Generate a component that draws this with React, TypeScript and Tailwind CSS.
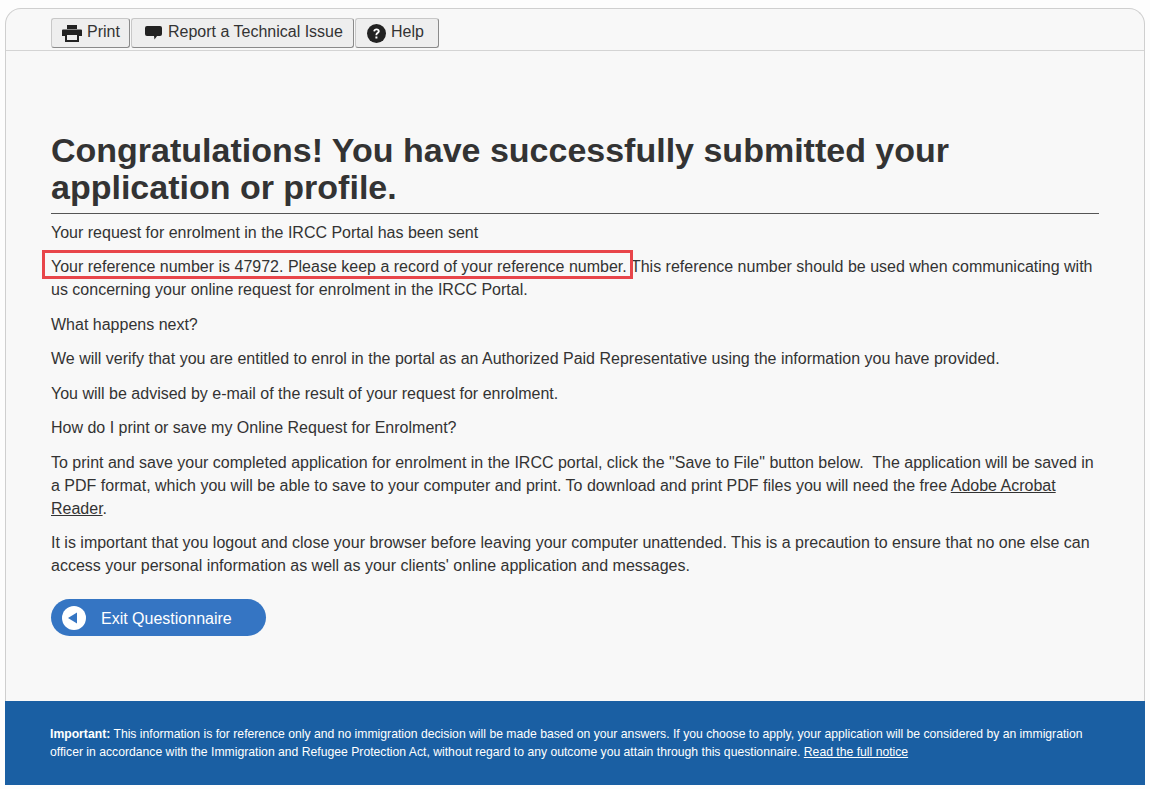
import React from "react";

function PrinterIcon() {
  return (
    <svg width="20" height="17" viewBox="0 0 20 17" fill="#222">
      <path d="M5 0h10v4H5z" />
      <path fillRule="evenodd" d="M1 4.500h18q1 0 1 1V11h-3v6H3v-6H0V5.500q0-1 1-1zM5 10v5h10v-5z" />
    </svg>
  );
}

function CommentIcon() {
  return (
    <svg width="17" height="16" viewBox="0 0 17 16" fill="#222">
      <path d="M2 1h13q2 0 2 2v6q0 2-2 2h-3l-2.500 3.500L9 11H2q-2 0-2-2V3q0-2 2-2z" />
    </svg>
  );
}

function HelpIcon() {
  return (
    <svg width="19" height="19" viewBox="0 0 19 19">
      <circle cx="9.500" cy="9.500" r="9.500" fill="#222" />
      <path d="M6.300 7.300c.2-1.800 1.500-2.700 3.200-2.700 1.800 0 3.200 1 3.200 2.600 0 2.200-2.500 2.200-2.500 4H8.500c0-2.700 2.300-2.800 2.300-3.900 0-.6-.6-1-1.300-1-.8 0-1.300.5-1.400 1.200z" fill="#fff" />
      <rect x="8.400" y="12.500" width="2" height="2" fill="#fff" />
    </svg>
  );
}

function ToolButton({ icon, label, className }: { icon: React.ReactNode; label: string; className: string }) {
  return (
    <button className={`flex h-[30px] items-center rounded-[3px] border border-[#c8c8c8] border-r-[#8a8a8a] border-b-[#8a8a8a] bg-[#eeeeee] text-[16px] text-[#333333] ${className}`}>
      {icon}
      <span className="relative top-[-2px]">{label}</span>
    </button>
  );
}

export default function App() {
  return (
    <div className="h-[789px] overflow-hidden bg-[#fdfdfd] pt-[8px] pl-[5px] pr-[5px] font-['Liberation_Sans',Arial,sans-serif] text-[16px] leading-[23px] text-[#333333]">
      <div className="relative flex h-[777px] flex-col">
        <div className="flex h-[693px] flex-col rounded-t-[16px] border-x border-t border-[#cfcfcf] bg-[#f8f8f8]">
          <div className="flex h-[42px] gap-[1px] border-b border-[#d4d4d4] pl-[45px] pt-[9px]">
            <ToolButton icon={<PrinterIcon />} label="Print" className="w-[79px] gap-[5px] pl-[10px]" />
            <ToolButton icon={<CommentIcon />} label="Report a Technical Issue" className="w-[223px] gap-[6px] pl-[13px]" />
            <ToolButton icon={<HelpIcon />} label="Help" className="w-[84px] gap-[5px] pl-[11px]" />
          </div>
          <div className="relative px-[45px] pt-[81px]">
            <h1 className="border-b border-[#555555] pb-[7px] text-[34px] leading-[37px] font-bold text-[#333333]">
              Congratulations! You have successfully submitted your application or profile.
            </h1>
            <div className="mt-[6.75px] flex flex-col gap-[11.5px]">
              <p>Your request for enrolment in the IRCC Portal has been sent</p>
              <p>
                Your reference number is 47972. Please keep a record of your reference number. This reference number should be used when communicating with us concerning your online request for enrolment in the IRCC Portal.
              </p>
              <p>What happens next?</p>
              <p>We will verify that you are entitled to enrol in the portal as an Authorized Paid Representative using the information you have provided.</p>
              <p>You will be advised by e-mail of the result of your request for enrolment.</p>
              <p>How do I print or save my Online Request for Enrolment?</p>
              <p>
                To print and save your completed application for enrolment in the IRCC portal, click the "Save to File" button below.&nbsp; The application will be saved in a PDF format, which you will be able to save to your computer and print. To download and print PDF files you will need the free <a className="underline">Adobe Acrobat Reader</a>.
              </p>
              <p>It is important that you logout and close your browser before leaving your computer unattended. This is a precaution to ensure that no one else can access your personal information as well as your clients' online application and messages.</p>
            </div>
            <button className="mt-[22px] flex h-[37px] w-[215px] items-center rounded-[19px] bg-[#3575c3] pl-[11px] text-[16px] text-white">
              <svg width="24" height="24" viewBox="0 0 24 24" className="mr-[15px]">
                <circle cx="12" cy="12" r="12" fill="#ffffff" />
                <path d="M6 12l9-5.500v11z" fill="#3575c3" />
              </svg>
              <span className="relative top-[1px]">Exit Questionnaire</span>
            </button>
            <div className="absolute top-[199px] left-[36px] h-[29px] w-[591px] border-[3px] border-[#e8454a]" />
          </div>
        </div>
        <div className="flex h-[84px] flex-col justify-center bg-[#1a5fa3] px-[45px] text-[12.2px] leading-[18px] text-white">
          <p>
            <strong>Important:</strong> This information is for reference only and no immigration decision will be made based on your answers. If you choose to apply, your application will be considered by an immigration officer in accordance with the Immigration and Refugee Protection Act, without regard to any outcome you attain through this questionnaire. <a className="underline">Read the full notice</a>
          </p>
        </div>
      </div>
    </div>
  );
}
